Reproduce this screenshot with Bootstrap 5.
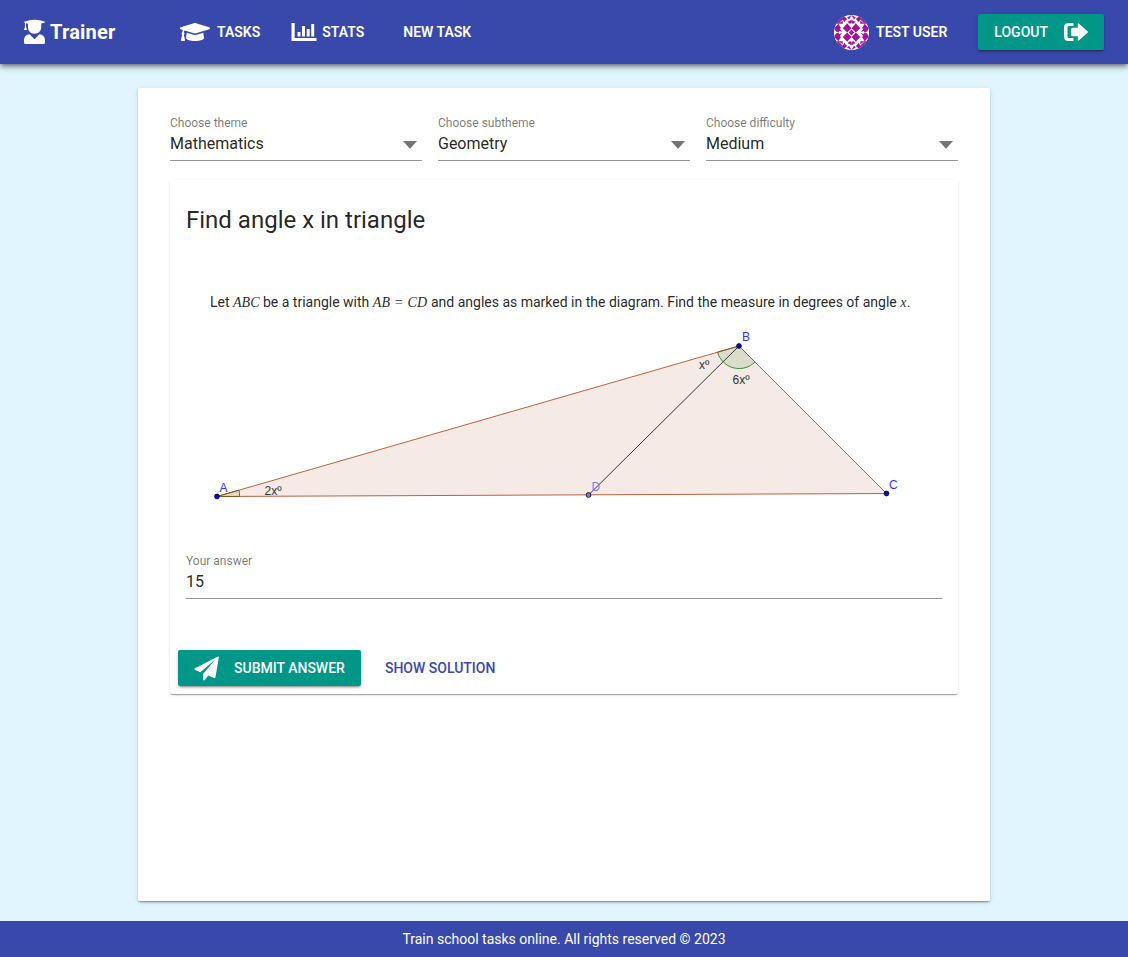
<!DOCTYPE html>
<html lang="en">
<head>
<meta charset="utf-8">
<meta name="viewport" content="width=device-width, initial-scale=1">
<title>Trainer</title>
<link href="https://cdn.jsdelivr.net/npm/bootstrap@5.3.0/dist/css/bootstrap.min.css" rel="stylesheet">
<style>
body{font-family:Roboto,"Liberation Sans",sans-serif;font-size:14px;line-height:20px;background:#e1f5fe;color:rgba(0,0,0,.87)}
.topbar{height:64px;background:#3949ab;padding:0 24px 0 23px;box-shadow:0 2px 4px -1px rgba(0,0,0,.4),0 4px 5px rgba(0,0,0,.2),0 1px 10px rgba(0,0,0,.14)}
.topbar a{color:#fff;font-weight:600;text-decoration:none}
.topbar .brand{font-size:20px;width:157px;font-weight:700;letter-spacing:.2px}
.flatbtn{border:0;border-radius:2px;height:36px;font-size:14px;font-weight:500;line-height:36px;padding:0 16px;text-transform:uppercase}
.flatbtn.solid{background:#009688;color:#fff;box-shadow:0 3px 1px -2px rgba(0,0,0,.2),0 2px 2px rgba(0,0,0,.14),0 1px 5px rgba(0,0,0,.12)}
.flatbtn.plain{background:none;color:#3949ab}
.sheet{width:852px;margin:24px auto 20px;padding:24px 32px;border-radius:2px;background:#fff;box-shadow:0 3px 1px -2px rgba(0,0,0,.2),0 2px 2px rgba(0,0,0,.14),0 1px 5px rgba(0,0,0,.12)}
.field{border-bottom:1px solid #949494;height:49px}
.field label{display:block;font-size:12px;line-height:14px;padding-top:4px;color:rgba(0,0,0,.54)}
.field .value{font-size:16px;line-height:20px;margin-top:4px;height:20px}
.task{margin-top:19px;height:514px;border-radius:2px;box-shadow:0 2px 1px -1px rgba(0,0,0,.2),0 1px 1px rgba(0,0,0,.14),0 1px 3px rgba(0,0,0,.12)}
.task h1{font-size:24px;font-weight:400;line-height:32px;margin:24px 16px 0}
.statement{margin:56px 40px 0;white-space:nowrap;height:20px}
.statement i{font-family:"Liberation Serif",serif;font-size:14px}
.statement .eq{letter-spacing:.25px}
.figure-svg{display:block;margin:8px 16px 0}
.figure-svg text{font-family:"Liberation Sans",sans-serif;font-size:12px}
.foot{height:36px;background:#3949ab;color:#fff;line-height:36px}
</style>
</head>
<body class="d-flex flex-column vh-100 overflow-hidden">
<nav class="topbar d-flex align-items-center flex-shrink-0">
  <a class="brand d-flex align-items-center" href="#">
    <svg width="23" height="26" viewBox="0 0 23 26" fill="#fff" style="margin-right:4px"><path d="M1 2.7Q6 .8 11.500 .8T22 2.700Q22.600 3 22 3.400L18.200 4.600V8C18.200 12 15.500 14.700 11.500 14.700S5 12 5 8V4.700L3 4.200V7.500L4 11H1L2 7.500V3.700L1 3.400Q.4 3 1 2.700Z"/><path d="M6.500 15.200L11.500 20.200L16.500 15.200C20 15.500 22 18 22 21.500V23.500Q22 25 20.500 25H2.500Q1 25 1 23.500V21.500C1 18 3 15.500 6.500 15.200Z"/></svg>
    <span>Trainer</span>
  </a>
  <a class="d-flex align-items-center" href="#">
    <svg width="30" height="24" viewBox="0 0 640 512" fill="#fff"><path d="M622.340 153.200L343.400 67.500c-15.200-4.670-31.600-4.670-46.790 0L17.660 153.200c-23.540 7.230-23.540 38.360 0 45.590l48.630 14.940c-10.670 13.190-17.230 29.280-17.880 46.900C38.780 266.150 32 276.110 32 288c0 10.780 5.680 19.850 13.860 25.650L20.330 428.530C18.110 438.520 25.710 448 35.940 448h56.110c10.240 0 17.840-9.480 15.620-19.470L82.140 313.650C90.320 307.850 96 298.780 96 288c0-11.570-6.470-21.250-15.660-26.870.760-15.020 8.440-28.300 20.690-36.720L296.600 284.500c9.060 2.780 26.440 6.250 46.790 0l278.950-85.700c23.550-7.240 23.550-38.360 0-45.600zM352.790 315.090c-28.530 8.760-52.840 3.920-65.590 0l-145.020-44.550L128 384c0 35.350 85.960 64 192 64s192-28.650 192-64l-14.180-113.470-145.030 44.560z"/></svg>
    <span style="margin-left:7px">TASKS</span>
  </a>
  <a class="d-flex align-items-center" href="#" style="margin-left:31px">
    <svg width="26" height="20" viewBox="0 0 26 20" fill="#fff"><path d="M.5 1h3.200v15H25.500v3H.5zM6.500 10h3v4.500h-3zM11 4h3v10.500h-3zM15.700 7h3v7.500h-3zM20.200 2h3v12.500h-3z"/></svg>
    <span style="margin-left:5px">STATS</span>
  </a>
  <a href="#" style="margin-left:39px">NEW TASK</a>
  <a class="d-flex align-items-center ms-auto" href="#">
    <svg width="35" height="35" viewBox="0 0 36 36"><defs><clipPath id="round"><circle cx="18" cy="18" r="18"/></clipPath>
      <g id="quarter" fill="#a1159b"><path d="M13.500 8.500L18 13.500L13.500 18L9 13.500ZM18 15.500L20.500 18L18 20.500L15.500 18ZM0 13.500L4.500 9L7 13L4.500 18L2 17ZM9 0L13.500 4L10.500 7.500L9 4.500L4.500 9L0 9V0ZM4.500 9L9 6L9 9ZM13.500 2.500L18 0L15.500 4.500ZM14 7L18 5L18 8.500L16 9ZM5.500 14L8.500 17.500L5.500 16.500Z"/></g></defs>
      <g clip-path="url(#round)"><path fill="#fff" d="M0 0h36v36H0z"/><use href="#quarter"/><use href="#quarter" transform="matrix(-1 0 0 1 36 0)"/><use href="#quarter" transform="matrix(1 0 0 -1 0 36)"/><use href="#quarter" transform="rotate(180 18 18)"/></g></svg>
    <span style="margin-left:7px">TEST USER</span>
  </a>
  <button class="flatbtn solid d-flex align-items-center" style="margin-left:31px">Logout
    <svg style="margin-left:16px" width="24" height="20" viewBox="0 0 24 20" fill="#fff"><path d="M9.500 1V4H5Q3.500 4 3.500 5.500V14.500Q3.500 16 5 16H9.500V19H4.500Q0 19 0 14.500V5.500Q0 1 4.500 1ZM14.500 1.300L23.500 9.300Q24.200 10 23.500 10.700L14.500 18.700Q13.800 19 13.800 18V14.200H8.500Q7.200 14.200 7.200 13V7Q7.200 5.800 8.500 5.800H13.800V2Q13.800 1 14.500 1.300Z"/></svg>
  </button>
</nav>
<main class="sheet flex-grow-1">
  <div class="row gx-3">
    <div class="col-4"><div class="field"><label>Choose theme</label><div class="value d-flex justify-content-between align-items-center"><span>Mathematics</span><svg class="me-1" width="16" height="9" viewBox="0 0 16 9"><path fill="#757575" d="M1 1H15L8.800 8Q8 8.800 7.200 8Z"/></svg></div></div></div>
    <div class="col-4"><div class="field"><label>Choose subtheme</label><div class="value d-flex justify-content-between align-items-center"><span>Geometry</span><svg class="me-1" width="16" height="9" viewBox="0 0 16 9"><path fill="#757575" d="M1 1H15L8.800 8Q8 8.800 7.200 8Z"/></svg></div></div></div>
    <div class="col-4"><div class="field"><label>Choose difficulty</label><div class="value d-flex justify-content-between align-items-center"><span>Medium</span><svg class="me-1" width="16" height="9" viewBox="0 0 16 9"><path fill="#757575" d="M1 1H15L8.800 8Q8 8.800 7.200 8Z"/></svg></div></div></div>
  </div>
  <section class="task d-flex flex-column">
    <h1>Find angle x in triangle</h1>
    <p class="statement">Let <i>ABC</i> be a triangle with <i class="eq">AB = CD</i> and angles as marked in the diagram. Find the measure in degrees of angle <i class="eq">x</i>.</p>
    <svg class="figure-svg" width="756" height="190" viewBox="186 320 756 190">
      <path d="M217 496.500L739 346L886.500 493.500Z" fill="#993300" fill-opacity=".1" stroke="#b8643f" stroke-width="1"/>
      <path d="M739 346L717.500 352.200A22.500 22.500 0 0 0 755 362Z" fill="#006400" fill-opacity=".1"/>
      <path d="M717.500 352.200A22.500 22.500 0 0 0 755 362" fill="none" stroke="#3d8b3d"/>
      <path d="M739 346L717.500 352.200M739 346L755 362M217 496.500L239 490.200M217 496.500H239.500" stroke="#8a5a20"/>
      <path d="M217 496.500L239 490.200Q239.800 493 239.500 496.500Z" fill="#006400" fill-opacity=".1"/><path d="M239 490.200Q239.800 493 239.500 496.500" fill="none" stroke="#3d8b3d"/>
      <path d="M739 346L588.500 495" stroke="#333" stroke-width="1"/>
      <g fill="#00f" stroke="#000" stroke-width=".8"><circle cx="739" cy="346" r="2.400"/><circle cx="217" cy="496.500" r="2.400"/><circle cx="886.500" cy="493.500" r="2.400"/><circle cx="588.500" cy="495" r="2.400" fill="#7777ff"/></g>
      <g fill="#3333ff"><text x="742" y="341">B</text><text x="219.500" y="492">A</text><text x="889" y="489">C</text><text x="591.500" y="491" fill="#8080ef">D</text></g>
      <g fill="#333"><text x="699" y="369">xº</text><text x="732.500" y="384">6xº</text><text x="264.500" y="495">2xº</text></g>
    </svg>
    <div class="field mx-3" style="margin-top:40px"><label>Your answer</label><div class="value">15</div></div>
    <div class="d-flex mt-auto p-2">
      <button class="flatbtn solid d-flex align-items-center"><svg style="margin-right:15px" width="25" height="25" viewBox="0 0 25 25" fill="#fff"><path d="M23.500 .7Q25 0 24.800 1.500L21.500 21.200Q21.200 22.500 20 22L14.200 19.600L11 23.800Q9.500 25.500 9 23.500V18L21.300 3.500L6.300 16.300L1 14Q-.6 13 1 12.200Z"/></svg>Submit answer</button>
      <button class="flatbtn plain ms-2">Show solution</button>
    </div>
  </section>
</main>
<footer class="foot text-center flex-shrink-0">Train school tasks online. All rights reserved © 2023</footer>
<script src="https://cdn.jsdelivr.net/npm/bootstrap@5.3.0/dist/js/bootstrap.bundle.min.js"></script>
</body>
</html>
